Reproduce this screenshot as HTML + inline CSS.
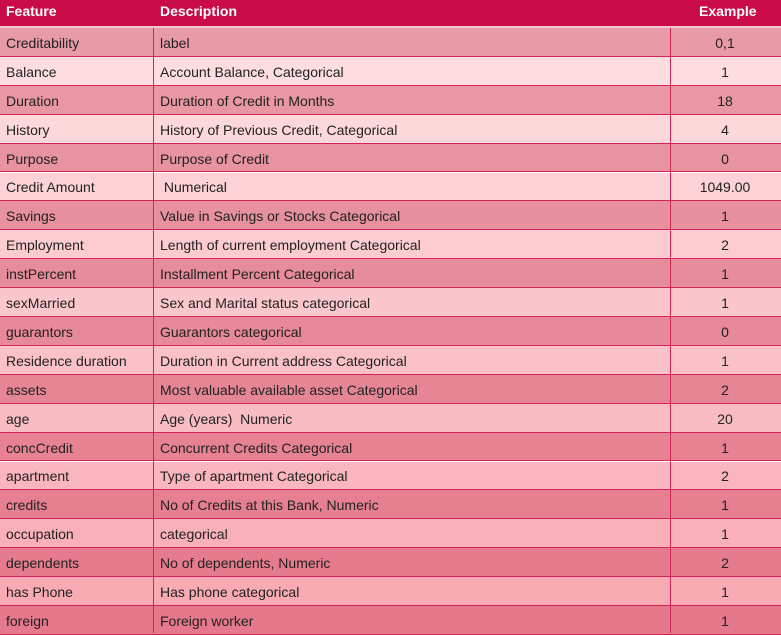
<!DOCTYPE html>
<html><head><style>
body{margin:0;width:781px;height:633px;overflow:hidden;background:#fff;font-family:"Liberation Sans",Arial,sans-serif;}
.h{position:absolute;left:0;top:0;width:781px;height:26px;background:#c90c47;color:#fff;font-weight:bold;font-size:14px;border-bottom:2px solid #f2c6cf}
.h span{position:absolute;top:3px;white-space:nowrap}
.r span{position:absolute;top:calc(50% + 1px);transform:translateY(-50%);white-space:nowrap}
.r{position:absolute;left:0;width:781px;font-size:14px;color:#222;box-sizing:border-box;border-bottom:1px solid #d0245a}
.v{position:absolute;top:28px;bottom:0;width:1px;background:#d0245a}
</style></head><body>
<div class="h"><span style="left:6px">Feature</span><span style="left:160px">Description</span><span style="left:699px">Example</span></div>
<div id="t"></div>
<script>
var d=[["Creditability","label","0,1"],["Balance","Account Balance, Categorical","1"],["Duration","Duration of Credit in Months","18"],["History","History of Previous Credit, Categorical","4"],["Purpose","Purpose of Credit","0"],["Credit Amount"," Numerical","1049.00"],["Savings","Value in Savings or Stocks Categorical","1"],["Employment","Length of current employment Categorical","2"],["instPercent","Installment Percent Categorical","1"],["sexMarried","Sex and Marital status categorical","1"],["guarantors","Guarantors categorical","0"],["Residence duration","Duration in Current address Categorical","1"],["assets","Most valuable available asset Categorical","2"],["age","Age (years)  Numeric","20"],["concCredit","Concurrent Credits Categorical","1"],["apartment","Type of apartment Categorical","2"],["credits","No of Credits at this Bank, Numeric","1"],["occupation","categorical","1"],["dependents","No of dependents, Numeric","2"],["has Phone","Has phone categorical","1"],["foreign","Foreign worker","1"]];
function mix(a,b,t){return "rgb("+a.map((x,i)=>Math.round(x+(b[i]-x)*t)).join(",")+")";}
var h="";
d.forEach(function(r,i){var t=i/20;var c=i%2==0?mix([232,154,166],[229,120,138],t):mix([253,224,226],[249,168,178],t);
var top=28+i*28.9;
h+='<div class="r" style="top:'+top+'px;height:28.9px;background:'+c+'"><span style="left:6px">'+r[0]+'</span><span style="left:160px">'+r[1].replace(/ /g,"&nbsp;")+'</span><span style="left:725px;transform:translate(-50%,-50%)">'+r[2]+'</span></div>';});
h+='<div class="v" style="left:153px"></div><div class="v" style="left:670px"></div>';
document.getElementById("t").innerHTML=h;
</script>
</body></html>
